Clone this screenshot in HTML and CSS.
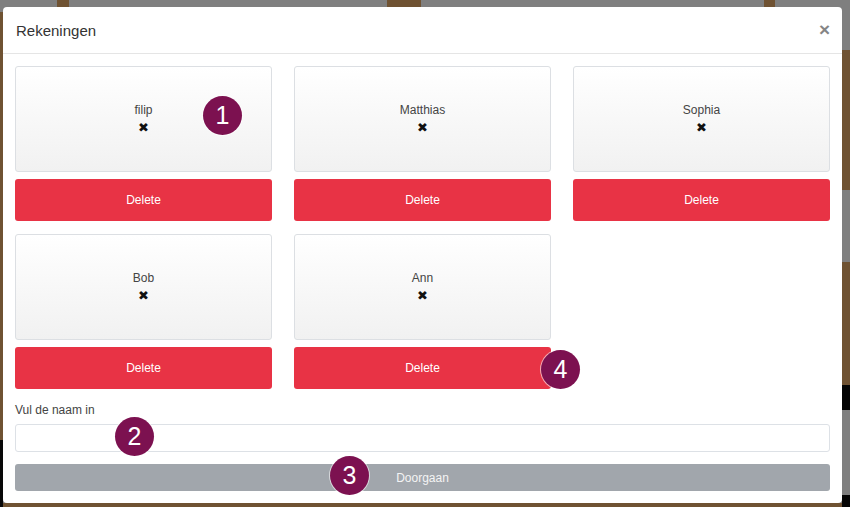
FILE: index.html
```html
<!DOCTYPE html>
<html lang="nl">
<head>
  <meta charset="UTF-8">
  <title>Rekeningen</title>
  <link rel="stylesheet" href="styles.css">
</head>
<body>

<div class="modal">
  <div class="modal-header">
    <h4>Rekeningen</h4>
    <span class="close">&times;</span>
  </div>
  <div class="modal-body">
    <div class="accounts">
      <div class="account">
        <div class="account-card"><span class="name">filip</span><span class="x">&#x2716;</span></div>
        <button class="btn-delete">Delete</button>
      </div>
      <div class="account">
        <div class="account-card"><span class="name">Matthias</span><span class="x">&#x2716;</span></div>
        <button class="btn-delete">Delete</button>
      </div>
      <div class="account">
        <div class="account-card"><span class="name">Sophia</span><span class="x">&#x2716;</span></div>
        <button class="btn-delete">Delete</button>
      </div>
      <div class="account">
        <div class="account-card"><span class="name">Bob</span><span class="x">&#x2716;</span></div>
        <button class="btn-delete">Delete</button>
      </div>
      <div class="account">
        <div class="account-card"><span class="name">Ann</span><span class="x">&#x2716;</span></div>
        <button class="btn-delete">Delete</button>
      </div>
    </div>
    <label class="label">Vul de naam in</label>
    <input class="input" type="text">
    <button class="btn-next">Doorgaan</button>
  </div>
</div>

<span class="badge b1">1</span>
<span class="badge b2">2</span>
<span class="badge b3">3</span>
<span class="badge b4">4</span>

</body>
</html>
```

FILE: styles.css
```css
html, body {
  height: 100%;
}
body {
  margin: 0;
  padding: 7px 8px 4px 3px;
  box-sizing: border-box;
  font-family: 'Liberation Sans', Arial, sans-serif;
  color: #333;
  background-color: #7f7f7f;
  background-image:
    linear-gradient(to bottom, #7f7f7f 0 12px, #6f5232 12px 440px, #080808 440px),
    linear-gradient(to bottom, #7f7f7f 0 50px, #6f5232 50px 190px, #7f7f7f 190px 262px, #6f5232 262px 385px, #050505 385px 410px, #7f7f7f 410px 495px, #050505 495px),
    linear-gradient(#6f5232, #6f5232),
    linear-gradient(#6f5232, #6f5232),
    linear-gradient(#6f5232, #6f5232),
    linear-gradient(#6f5232, #6f5232);
  background-size: 3px 100%, 8px 100%, 12px 7px, 34px 7px, 11px 7px, 100% 4px;
  background-position: 0 0, right 0 top 0, 57px 0, 387px 0, 764px 0, 0 bottom;
  background-repeat: no-repeat;
  position: relative;
}
.modal {
  background: #fff;
  border-radius: 4px;
  height: 100%;
  box-sizing: border-box;
}
.modal-header {
  height: 46px;
  display: flex;
  align-items: center;
  justify-content: space-between;
  padding: 0 12px 0 13px;
  border-bottom: 1px solid #e5e5e5;
}
.modal-header h4 {
  margin: 0;
  font-size: 15px;
  font-weight: normal;
  color: #333;
}
.close {
  font-size: 19px;
  font-weight: bold;
  color: #858585;
  line-height: 1;
  margin-top: -1px;
}
.modal-body {
  padding: 12px 12px;
}
.accounts {
  display: grid;
  grid-template-columns: repeat(3, 1fr);
  column-gap: 22px;
  row-gap: 13px;
}
.account-card {
  height: 106px;
  box-sizing: border-box;
  border: 1px solid #dcdfe3;
  border-radius: 3px;
  background: linear-gradient(#fff, #f1f1f1);
  display: flex;
  flex-direction: column;
  align-items: center;
  justify-content: center;
  gap: 3px;
}
.name {
  font-size: 12px;
  color: #444;
}
.x {
  font-size: 13px;
  color: #111;
  line-height: 15px;
}
.btn-delete, .btn-next {
  display: block;
  width: 100%;
  border: 0;
  border-radius: 3px;
  color: #fff;
  font-family: 'Liberation Sans', Arial, sans-serif;
  font-size: 12px;
}
.btn-delete {
  margin-top: 7px;
  height: 42px;
  background: #e83345;
}
.label {
  display: block;
  margin-top: 13px;
  font-size: 12px;
  line-height: 16px;
  color: #444;
}
.input {
  display: block;
  width: 100%;
  box-sizing: border-box;
  height: 28px;
  margin-top: 6px;
  border: 1px solid #dde1e6;
  border-radius: 3px;
}
.btn-next {
  margin-top: 12px;
  height: 27px;
  background: #a1a6ac;
  color: #f4f4f4;
}
.badge {
  position: absolute;
  width: 39px;
  height: 39px;
  border-radius: 50%;
  background: #7c1150;
  box-shadow: 0 0 0 1px rgba(255,255,255,0.6);
  color: #fff;
  font-size: 25px;
  line-height: 39px;
  text-align: center;
}
.b1 { left: 203px; top: 96px; }
.b2 { left: 115px; top: 417px; }
.b3 { left: 330px; top: 456px; }
.b4 { left: 541px; top: 350px; }
```
